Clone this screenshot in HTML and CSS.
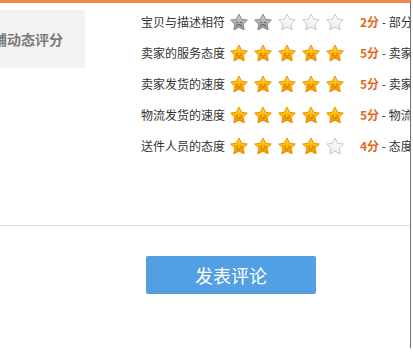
FILE: index.html
```html
<!DOCTYPE html>
<html lang="zh">
<head>
<meta charset="utf-8">
<link rel="stylesheet" href="styles.css">
</head>
<body>
<svg class="defs" width="0" height="0" aria-hidden="true">
  <defs>
    <linearGradient id="gGold" x1="0" y1="0" x2="0" y2="1">
      <stop offset="0" stop-color="#ffe040"/>
      <stop offset="0.55" stop-color="#ffb400"/>
      <stop offset="1" stop-color="#f08c00"/>
    </linearGradient>
    <linearGradient id="gGray" x1="0" y1="0" x2="0" y2="1">
      <stop offset="0" stop-color="#d4d4d4"/>
      <stop offset="1" stop-color="#8e8e8e"/>
    </linearGradient>
    <linearGradient id="gEmpty" x1="0" y1="0" x2="0" y2="1">
      <stop offset="0" stop-color="#ffffff"/>
      <stop offset="1" stop-color="#ececec"/>
    </linearGradient>
    <symbol id="starGold" viewBox="0 0 18 18">
      <polygon points="9,1 11.59,6.24 17.37,7.08 13.18,11.16 14.17,16.92 9,14.2 3.83,16.92 4.82,11.16 0.63,7.08 6.41,6.24" fill="url(#gGold)" stroke="#e99200" stroke-width="1" stroke-linejoin="round"/>
      <path d="M6.3 9.4 Q7 8.4 7.7 9.4 M10.3 9.4 Q11 8.4 11.7 9.4 M6.4 11.2 Q9 13.8 11.6 11.2" fill="none" stroke="#c86400" stroke-width="0.9" stroke-linecap="round"/>
    </symbol>
    <symbol id="starGray" viewBox="0 0 18 18">
      <polygon points="9,1 11.59,6.24 17.37,7.08 13.18,11.16 14.17,16.92 9,14.2 3.83,16.92 4.82,11.16 0.63,7.08 6.41,6.24" fill="url(#gGray)" stroke="#8a8a8a" stroke-width="1" stroke-linejoin="round"/>
      <path d="M6.3 9.4 Q7 8.4 7.7 9.4 M10.3 9.4 Q11 8.4 11.7 9.4 M6.4 12.4 Q9 10.2 11.6 12.4" fill="none" stroke="#555" stroke-width="0.9" stroke-linecap="round"/>
    </symbol>
    <symbol id="starEmpty" viewBox="0 0 18 18">
      <polygon points="9,1 11.59,6.24 17.37,7.08 13.18,11.16 14.17,16.92 9,14.2 3.83,16.92 4.82,11.16 0.63,7.08 6.41,6.24" fill="url(#gEmpty)" stroke="#c8c8c8" stroke-width="1" stroke-linejoin="round"/>
    </symbol>
  </defs>
</svg>

<div class="panel">
  <div class="rating">
    <div class="shop-box"><span>店铺动态评分</span></div>
    <div class="rows">
      <div class="row">
        <span class="label">宝贝与描述相符</span>
        <span class="stars">
          <svg class="star"><use href="#starGray"/></svg>
          <svg class="star"><use href="#starGray"/></svg>
          <svg class="star"><use href="#starEmpty"/></svg>
          <svg class="star"><use href="#starEmpty"/></svg>
          <svg class="star"><use href="#starEmpty"/></svg>
        </span>
        <span class="score"><b>2分</b> - 部分相符，不太满意</span>
      </div>
      <div class="row">
        <span class="label">卖家的服务态度</span>
        <span class="stars">
          <svg class="star"><use href="#starGold"/></svg>
          <svg class="star"><use href="#starGold"/></svg>
          <svg class="star"><use href="#starGold"/></svg>
          <svg class="star"><use href="#starGold"/></svg>
          <svg class="star"><use href="#starGold"/></svg>
        </span>
        <span class="score"><b>5分</b> - 卖家服务非常好</span>
      </div>
      <div class="row">
        <span class="label">卖家发货的速度</span>
        <span class="stars">
          <svg class="star"><use href="#starGold"/></svg>
          <svg class="star"><use href="#starGold"/></svg>
          <svg class="star"><use href="#starGold"/></svg>
          <svg class="star"><use href="#starGold"/></svg>
          <svg class="star"><use href="#starGold"/></svg>
        </span>
        <span class="score"><b>5分</b> - 卖家发货速度非常快</span>
      </div>
      <div class="row">
        <span class="label">物流发货的速度</span>
        <span class="stars">
          <svg class="star"><use href="#starGold"/></svg>
          <svg class="star"><use href="#starGold"/></svg>
          <svg class="star"><use href="#starGold"/></svg>
          <svg class="star"><use href="#starGold"/></svg>
          <svg class="star"><use href="#starGold"/></svg>
        </span>
        <span class="score"><b>5分</b> - 物流发货速度非常快</span>
      </div>
      <div class="row">
        <span class="label">送件人员的态度</span>
        <span class="stars">
          <svg class="star"><use href="#starGold"/></svg>
          <svg class="star"><use href="#starGold"/></svg>
          <svg class="star"><use href="#starGold"/></svg>
          <svg class="star"><use href="#starGold"/></svg>
          <svg class="star"><use href="#starEmpty"/></svg>
        </span>
        <span class="score"><b>4分</b> - 态度很好</span>
      </div>
    </div>
  </div>
  <div class="divider"></div>
  <div class="actions">
    <button class="submit">发表评论</button>
  </div>
</div>
</body>
</html>
```

FILE: styles.css
```css
html, body {
  margin: 0;
  padding: 0;
  background: #fff;
}
body {
  font-family: "Noto Sans CJK SC", "Liberation Sans", sans-serif;
  color: #333;
}
.defs {
  position: absolute;
  width: 0;
  height: 0;
}
.panel {
  width: 410px;
  height: 345px;
  border-top: 3px solid #f0874f;
  border-right: 1px solid #6f6f6f;
  overflow: hidden;
  display: flex;
  flex-direction: column;
}
.rating {
  display: flex;
  align-items: flex-start;
  height: 222px;
  flex: 0 0 222px;
}
.shop-box {
  flex: 0 0 85px;
  height: 58px;
  margin-top: 7px;
  background: #f2f2f2;
  display: flex;
  align-items: center;
  justify-content: flex-end;
  padding-right: 22px;
  box-sizing: border-box;
  overflow: hidden;
  white-space: nowrap;
  font-size: 14px;
  font-weight: bold;
  color: #7a7a7a;
}
.rows {
  margin-left: 56px;
  padding-top: 3px;
  display: flex;
  flex-direction: column;
}
.row {
  height: 31px;
  display: flex;
  align-items: center;
  white-space: nowrap;
  font-size: 12px;
}
.label {
  width: 89px;
  color: #333;
}
.stars {
  display: flex;
  gap: 6px;
}
.star {
  width: 18px;
  height: 18px;
  display: block;
}
.score {
  margin-left: 16px;
  color: #333;
}
.score b {
  color: #e0691c;
  font-weight: bold;
}
.divider {
  height: 1px;
  flex: 0 0 1px;
  background: #e0e0e0;
}
.actions {
  display: flex;
  padding: 30px 0 0 146px;
}
.submit {
  width: 170px;
  height: 38px;
  border: 0;
  border-radius: 2px;
  background: #529fe3;
  color: #fff;
  font-family: "Noto Sans CJK SC", sans-serif;
  font-size: 18px;
  padding: 0;
}
```
